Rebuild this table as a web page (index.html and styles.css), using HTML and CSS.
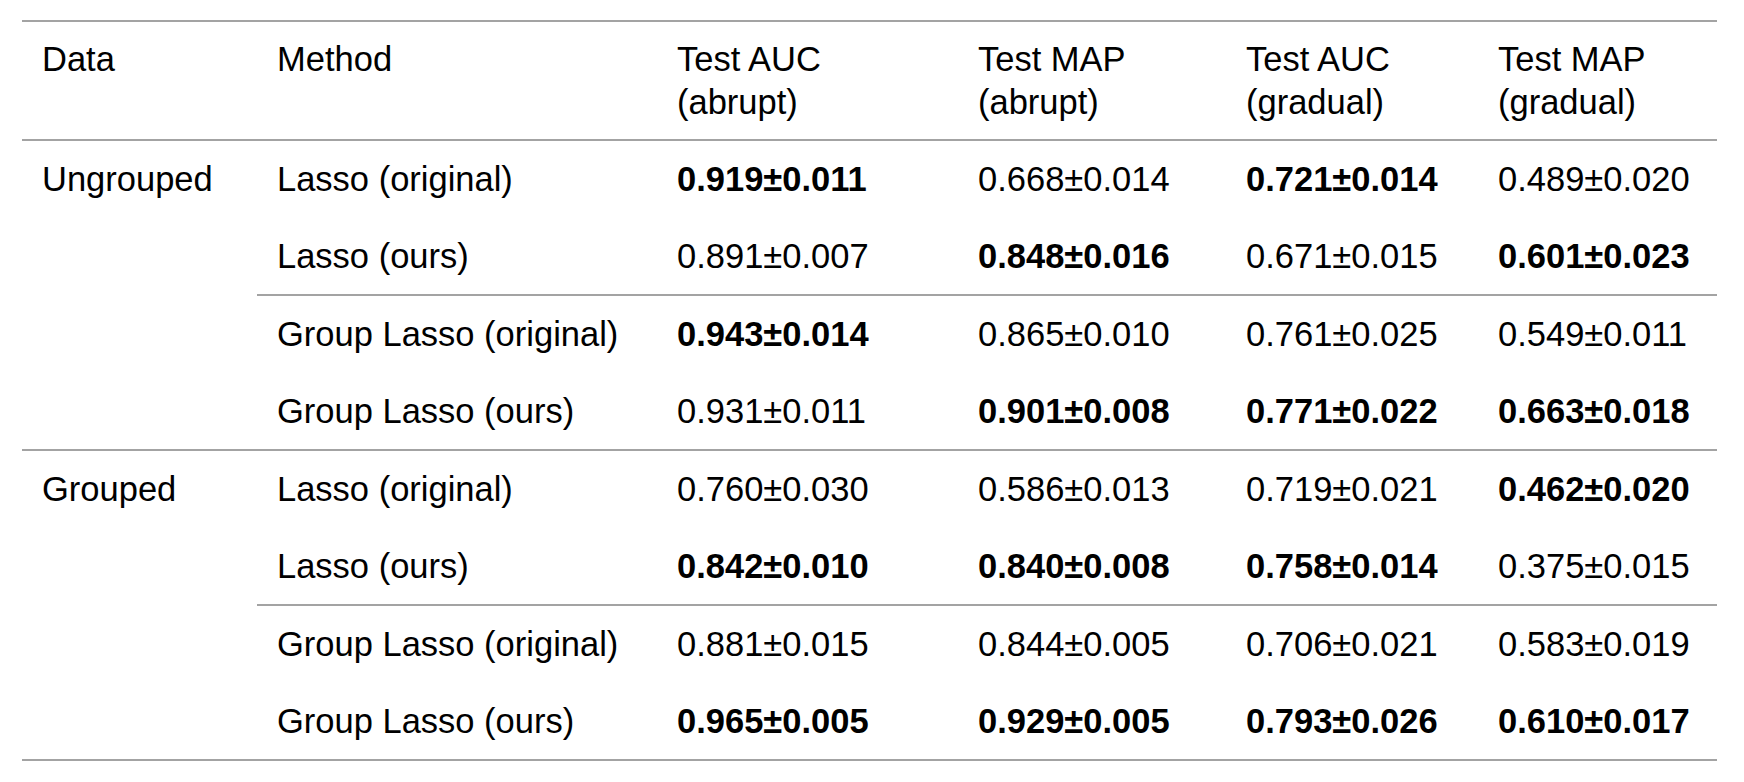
FILE: index.html
```html
<!DOCTYPE html>
<html lang="en">
<head>
<meta charset="utf-8">
<title>Results table</title>
<link rel="stylesheet" href="styles.css">
</head>
<body>
<table class="results">
  <colgroup>
    <col class="c-data">
    <col class="c-method">
    <col class="c-auc-a">
    <col class="c-map-a">
    <col class="c-auc-g">
    <col class="c-map-g">
  </colgroup>
  <thead>
    <tr>
      <th>Data</th>
      <th>Method</th>
      <th>Test AUC<br>(abrupt)</th>
      <th>Test MAP<br>(abrupt)</th>
      <th>Test AUC<br>(gradual)</th>
      <th>Test MAP<br>(gradual)</th>
    </tr>
  </thead>
  <tbody class="group">
    <tr>
      <td rowspan="4">Ungrouped</td>
      <td>Lasso (original)</td>
      <td class="best">0.919±0.011</td>
      <td>0.668±0.014</td>
      <td class="best">0.721±0.014</td>
      <td>0.489±0.020</td>
    </tr>
    <tr>
      <td>Lasso (ours)</td>
      <td>0.891±0.007</td>
      <td class="best">0.848±0.016</td>
      <td>0.671±0.015</td>
      <td class="best">0.601±0.023</td>
    </tr>
    <tr class="sub">
      <td>Group Lasso (original)</td>
      <td class="best">0.943±0.014</td>
      <td>0.865±0.010</td>
      <td>0.761±0.025</td>
      <td>0.549±0.011</td>
    </tr>
    <tr>
      <td>Group Lasso (ours)</td>
      <td>0.931±0.011</td>
      <td class="best">0.901±0.008</td>
      <td class="best">0.771±0.022</td>
      <td class="best">0.663±0.018</td>
    </tr>
  </tbody>
  <tbody class="group">
    <tr>
      <td rowspan="4">Grouped</td>
      <td>Lasso (original)</td>
      <td>0.760±0.030</td>
      <td>0.586±0.013</td>
      <td>0.719±0.021</td>
      <td class="best">0.462±0.020</td>
    </tr>
    <tr>
      <td>Lasso (ours)</td>
      <td class="best">0.842±0.010</td>
      <td class="best">0.840±0.008</td>
      <td class="best">0.758±0.014</td>
      <td>0.375±0.015</td>
    </tr>
    <tr class="sub">
      <td>Group Lasso (original)</td>
      <td>0.881±0.015</td>
      <td>0.844±0.005</td>
      <td>0.706±0.021</td>
      <td>0.583±0.019</td>
    </tr>
    <tr>
      <td>Group Lasso (ours)</td>
      <td class="best">0.965±0.005</td>
      <td class="best">0.929±0.005</td>
      <td class="best">0.793±0.026</td>
      <td class="best">0.610±0.017</td>
    </tr>
  </tbody>
</table>
</body>
</html>
```

FILE: styles.css
```css
html, body {
  margin: 0;
  padding: 0;
  background: #ffffff;
}

body {
  font-family: "Liberation Sans", Arial, sans-serif;
  font-size: 34.5px;
  color: #000000;
}

.results {
  margin: 20px 0 0 22px;
  width: 1695px;
  table-layout: fixed;
  border-collapse: collapse;
  border-top: 2px solid #a3a3a3;
  border-bottom: 2px solid #a3a3a3;
}

.c-data { width: 235px; }
.c-method { width: 400px; }
.c-auc-a { width: 301px; }
.c-map-a { width: 268px; }
.c-auc-g { width: 252px; }
.c-map-g { width: 239px; }

.results th,
.results td {
  text-align: left;
  vertical-align: top;
  white-space: nowrap;
  line-height: 43px;
  font-weight: normal;
  padding: 17px 0 16.5px 20px;
}

.results th {
  padding: 16px 0 15px 20px;
}

.results thead tr {
  border-bottom: 2px solid #a3a3a3;
}

.group + .group tr:first-child td {
  border-top: 2px solid #a3a3a3;
}

.results .sub td {
  border-top: 2px solid #a3a3a3;
}

.results td.best {
  font-weight: bold;
}
```
